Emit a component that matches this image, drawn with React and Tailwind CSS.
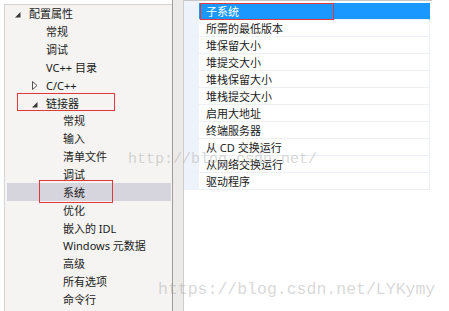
const tree = [
  { label: '配置属性', level: 0, icon: 'open' },
  { label: '常规', level: 1 },
  { label: '调试', level: 1 },
  { label: 'VC++ 目录', level: 1 },
  { label: 'C/C++', level: 1, icon: 'closed' },
  { label: '链接器', level: 1, icon: 'open' },
  { label: '常规', level: 2 },
  { label: '输入', level: 2 },
  { label: '清单文件', level: 2 },
  { label: '调试', level: 2 },
  { label: '系统', level: 2, selected: true },
  { label: '优化', level: 2 },
  { label: '嵌入的 IDL', level: 2 },
  { label: 'Windows 元数据', level: 2 },
  { label: '高级', level: 2 },
  { label: '所有选项', level: 2 },
  { label: '命令行', level: 2 },
]

const props = [
  '子系统',
  '所需的最低版本',
  '堆保留大小',
  '堆提交大小',
  '堆栈保留大小',
  '堆栈提交大小',
  '启用大地址',
  '终端服务器',
  '从 CD 交换运行',
  '从网络交换运行',
  '驱动程序',
]

const indent = ['pl-[8px]', 'pl-[25px]', 'pl-[42px]']

function Arrow({ type }) {
  if (type === 'open') {
    return (
      <svg width="6" height="6" viewBox="0 0 6 6" className="mt-[3px]">
        <polygon points="5.5,0 5.5,5.5 0,5.5" fill="#3a3a3a" />
      </svg>
    )
  }
  if (type === 'closed') {
    return (
      <svg width="6" height="9" viewBox="0 0 6 9" className="mt-[1px]">
        <polygon points="0.5,0.5 5,4.5 0.5,8.5" fill="none" stroke="#555" strokeWidth="1" />
      </svg>
    )
  }
  return null
}

export default function App() {
  return (
    <div
      className="relative w-[449px] h-[311px] bg-white overflow-hidden flex text-[11px] text-[#1b1b1b]"
      style={{ fontFamily: '"Noto Sans", "Noto Sans CJK SC", sans-serif' }}
    >
      {/* tree */}
      <div className="pt-[4px] pl-[4px] h-full">
        <div className="w-[168px] h-full bg-[#f5f4f2] border-l border-t border-[#d6d6d6] pt-[0px]">
          {tree.map((item, i) => (
            <div
              key={i}
              className={`h-[17.85px] ml-[2px] mr-[1px] flex items-center ${indent[item.level]} ${
                item.selected ? 'bg-[#d6d4dd]' : ''
              }`}
            >
              <div className="w-[14px] flex items-center">
                <Arrow type={item.icon} />
              </div>
              <span className="leading-none whitespace-nowrap">{item.label}</span>
            </div>
          ))}
        </div>
      </div>

      {/* splitter */}
      <div className="w-[12px] h-full border-l border-[#9c9c9c] border-r border-r-[#cfcecc] bg-[#ecebe9]" />

      {/* property grid */}
      <div className="w-[248px]">
        <div className="border-t border-[#c6c6c6] flex">
          <div className="w-[15px] h-[189px] bg-[#eef2fa]" />
          <div className="w-[233px] pt-[2px]">
            {props.map((p, i) => (
              <div
                key={i}
                className={`h-[17px] w-[231px] border-b border-[#eceff6] border-r flex items-center pl-[7px] ${
                  i === 0 ? 'bg-[#1a98ff] text-white border-r-[#1a98ff]' : 'border-r-[#eceff6]'
                }`}
              >
                <span className="leading-none whitespace-nowrap">{p}</span>
              </div>
            ))}
          </div>
        </div>
      </div>

      {/* annotations */}
      <div className="absolute left-[200px] top-[3px] w-[134px] h-[17px] border border-[#e5383d]" />
      <div className="absolute left-[17px] top-[93px] w-[98px] h-[18px] border border-[#e5383d]" />
      <div className="absolute left-[39px] top-[180px] w-[74px] h-[23px] border border-[#e5383d]" />

      {/* watermarks */}
      <div
        className="absolute left-[128px] top-[150px] text-[15px] leading-[20px] text-[#9a9a9a]/40 pointer-events-none whitespace-nowrap"
        style={{ fontFamily: '"Liberation Mono", monospace' }}
      >
        http://blog.csdn.net/
      </div>
      <div
        className="absolute left-[158px] top-[279px] text-[16.5px] leading-[22px] text-[#9a9a9a]/40 pointer-events-none whitespace-nowrap"
        style={{ fontFamily: '"Liberation Mono", monospace' }}
      >
        https://blog.csdn.net/LYKymy
      </div>
    </div>
  )
}
